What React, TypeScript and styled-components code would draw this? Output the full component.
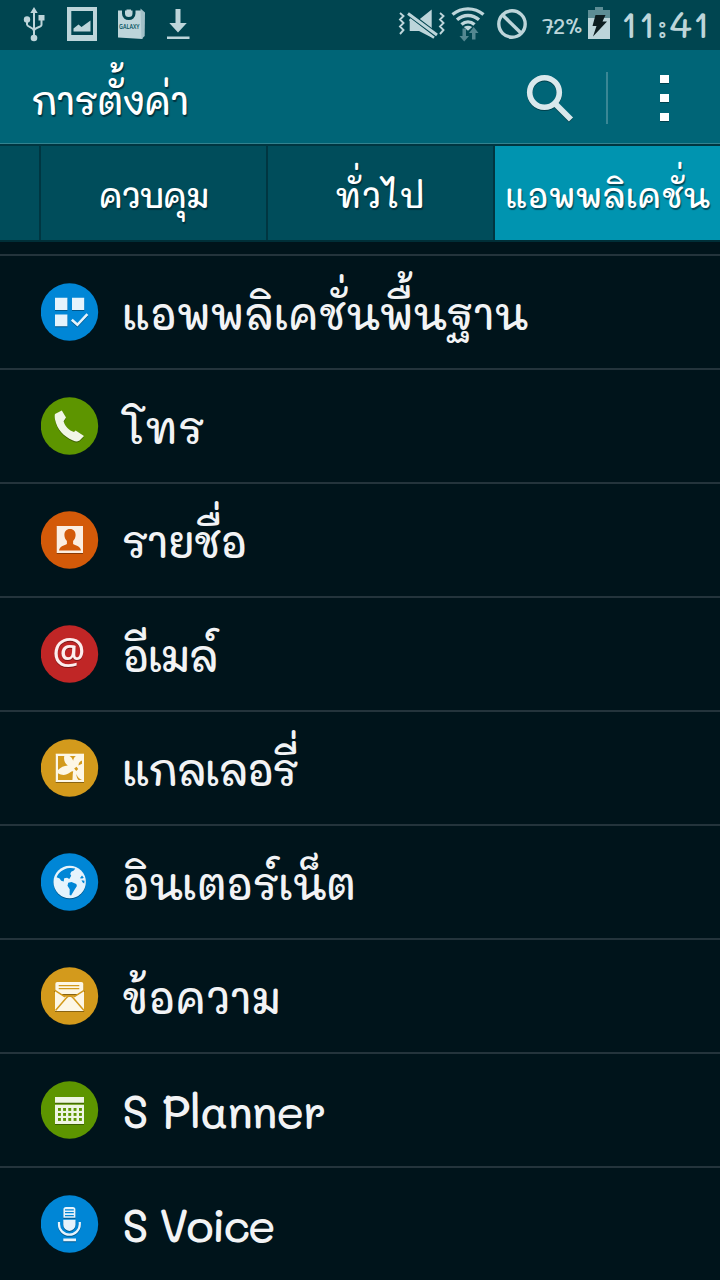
import React from 'react';
import styled, { createGlobalStyle } from 'styled-components';

const GlobalStyle = createGlobalStyle`
  * { box-sizing: border-box; }
  body {
    margin: 0;
    background: #00141b;
    color: #f2f3f5;
    font-family: Mali, Itim, "Noto Sans", sans-serif;
    font-weight: 500;
  }
`;

const Screen = styled.div`
  width: 720px;
  height: 1280px;
  overflow: hidden;
  display: flex;
  flex-direction: column;
  background: #00141b;
`;

const StatusBar = styled.header`
  height: 50px;
  flex: none;
  display: flex;
  justify-content: space-between;
  padding: 0 11px 0 22px;
  background: #004550;
  color: #bdd5da;
`;

const StatusGroup = styled.div<{ $gap?: number; $left?: number }>`
  display: flex;
  align-items: center;
  gap: ${p => p.$gap ?? 0}px;
  margin-left: ${p => p.$left ?? 0}px;
  svg { display: block; flex: none; }
`;

const StatusText = styled.span<{ $size: number; $width: number; $track?: number; $left: number; $line?: number }>`
  width: ${p => p.$width}px;
  margin-left: ${p => p.$left}px;
  font-size: ${p => p.$size}px;
  letter-spacing: ${p => p.$track ?? 0}px;
  line-height: ${p => p.$line ?? 50}px;
  height: 50px;
  white-space: nowrap;
`;

const ActionBar = styled.div`
  height: 94px;
  flex: none;
  display: flex;
  align-items: center;
  padding-left: 31px;
  background: #006577;
  border-bottom: 1px solid #338390;
`;

const Title = styled.h1`
  flex: 1;
  height: 93px;
  margin: 0;
  font-size: 38px;
  font-weight: 500;
  line-height: 101px;
  letter-spacing: -1.3px;
  color: #fff;
  white-space: nowrap;
  text-shadow: 1px 2px 1px rgba(0, 30, 40, 0.7);
`;

const ActionButton = styled.button<{ $width: number }>`
  width: ${p => p.$width}px;
  height: 93px;
  padding: 0;
  border: 0;
  background: none;
  svg { display: block; }
`;

const ActionDivider = styled.span`
  width: 2px;
  height: 52px;
  margin-top: 2px;
  background: #3a8795;
`;

const Tabs = styled.nav`
  height: 98px;
  flex: none;
  display: grid;
  grid-template-columns: 41px 227px 227px 225px;
  border-top: 2px solid #003641;
  border-bottom: 2px solid #002f38;
`;

const Tab = styled.div<{ $active?: boolean; $track?: number }>`
  height: 94px;
  text-align: center;
  background: ${p => (p.$active ? '#0094b0' : '#004d5b')};
  border-right: ${p => (p.$active ? '0' : '2px')} solid #003641;
  color: #fff;
  font-size: 34px;
  letter-spacing: ${p => p.$track ?? 0}px;
  line-height: 98px;
  white-space: nowrap;
  text-shadow: 1px 2px 1px rgba(0, 30, 40, 0.6);
`;

const List = styled.ul`
  flex: 1;
  min-height: 0;
  margin: 0;
  padding: 12px 0 0;
  list-style: none;
`;

const Row = styled.li`
  height: 114px;
  display: flex;
  align-items: center;
  gap: 23px;
  padding: 0 0 0 41px;
  border-top: 2px solid #24343c;
`;

const RowIcon = styled.svg`
  width: 58px;
  height: 58px;
  flex: none;
  display: block;
`;

const Label = styled.span<{ $size: number; $track: number }>`
  height: 112px;
  font-size: ${p => p.$size}px;
  letter-spacing: ${p => p.$track}px;
  line-height: 114px;
  white-space: nowrap;
`;

const Glyph = styled.g`
  filter: drop-shadow(0.7px 1px 0.5px rgba(0, 0, 0, 0.35));
`;

const icons: Record<string, (c: string) => React.ReactNode> = {
  apps: () => (
    <g fill="#e5f3fc">
      <path d="M14 14.8h12.4v12.2H14zM31 14.8h12.2v12.2H31zM14 31.6h12.4v11.6H14z" />
      <path d="M30.8 36.8l5.6 5 10-10.6" fill="none" stroke="#e5f3fc" strokeWidth="2.6" />
    </g>
  ),
  phone: () => (
    <path
      fill="#f1f6e6"
      d="M20.8 13.6L25 20.6 22.6 24.2C24 29.5 28 33.3 33 35L34.6 33.4 43 39 38.6 43.6C37 44.8 34.5 44.6 31.5 43.2 23 39.5 16 32.5 14 22.5 13.6 20 13.6 18.4 14 17Z"
    />
  ),
  contacts: c => (
    <>
      <path fill="#fbeee2" d="M15.7 15H42v27H15.7z" />
      <path
        fill={c}
        d="M29 18c3.600 0 5.600 2.500 5.600 6 0 2.500-1.100 4.500-2.500 6v3c2 1.600 7.300 1.700 7.900 6.500H18c.6-4.800 5.900-4.900 7.900-6.500v-3c-1.400-1.500-2.500-3.500-2.500-6 0-3.500 2-6 5.600-6z"
      />
    </>
  ),
  email: () => (
    <text x="27.800" y="38.700" textAnchor="middle" fill="#fdeeee" fontFamily='"Open Sans", sans-serif' fontSize="36.500" fontWeight="600">
      @
    </text>
  ),
  gallery: c => (
    <>
      <path fill="#fdf7e6" d="M14.700 14.700H43V43H14.700z" />
      <g fill={c}>
        <path d="M17 17h6.300c-.8 3.600.2 7 3.500 9.500-4 .3-7 1.800-9.800 4.500z" />
        <path d="M28.500 17h6.500c-1.700 1-2.600 2.600-2.800 4.800-.9-2.300-2-3.900-3.700-4.800z" />
        <path d="M17 34.300c4 2.400 8 2.200 12-.8 1.100-.9 2.200-1.300 3.200-1.200-.8 3.600-.3 6.200-.8 8.700H17z" />
        <path d="M41 21.500v3.200l-3.600 1.700c.2-2.500 1.500-4 3.600-4.900z" />
        <path d="M35.500 35c1 3.200 2.700 5 5.500 6h-3.500c-1.500-1.600-2.200-3.600-2-6z" />
        <path d="M33.200 29.500l2.300-1.700 1.700 2.200-1.900 1.900z" />
      </g>
    </>
  ),
  globe: c => (
    <>
      <circle cx="28.700" cy="29" r="16.200" fill="#e6f3fc" />
      <g fill={c}>
        <path d="M15.600 24.300C17.600 19.300 22.500 15.600 28.500 15c2-.2 4 .1 5.800.6l-1.500 1.800-2.600 1.300-1 2.200 1 1.900-1.900 3.300-2.200-1.400-2.900.6-.5 3.300-2.500-.8-1.600-2.400z" />
        <path d="M27.200 29.800l3.300-.9 4.800 2 .6 2.200-2.700 4.200-3.100 5.200-1.500-.6.100-5.700-2.200-3.500z" />
        <path d="M41 22.500l1.800 2.300-1.600.8-2.300-.4zM40.500 27.200l3 .5-.3 2.800-1.700-1.200z" />
      </g>
    </>
  ),
  messages: c => (
    <>
      <rect x="14.300" y="15" width="28" height="12" rx="2" fill="#fdf7e6" />
      <path d="M17.700 18.600h20.600M17.700 21.600h20.600" stroke={c} strokeWidth="1.200" />
      <path fill="#fdf7e6" d="M14 24l10 5.700h9L43 24v20H14z" />
      <path
        d="M13.500 23.200L24 29.800M43.500 23.200L33 29.800M14.500 43.500L25 31.200c2.300-3 5.200-3 7.500 0L43 43.500"
        fill="none"
        stroke={c}
        strokeWidth="1.500"
      />
    </>
  ),
  planner: c => (
    <>
      <path fill="#eef5e2" d="M14 16h29v5.700H14zM14 23.700h29V43H14z" />
      {[27, 32, 37].map(y => [17, 22.1, 27.3, 32.6, 38].map(x => <rect key={`${x}-${y}`} x={x} y={y} width="2.900" height="2.900" fill={c} />))}
    </>
  ),
  voice: c => (
    <>
      <path fill="#e6f3fc" d="M25 12h6.800a2.600 2.600 0 0 1 2.600 2.600v8.200h-12v-8.200A2.600 2.600 0 0 1 25 12z" />
      <path d="M24 14.800h8.800M24 17.600h8.800M24 20.600h8.800" stroke={c} strokeWidth="1.200" />
      <path fill="#e6f3fc" d="M22.300 24.700h12.200v5.100a6.100 6.100 0 0 1-12.200 0zM22.300 43.600H35v2.600H22.300z" />
      <path d="M18 27v2.300a10.400 10.400 0 0 0 20.800 0V27" fill="none" stroke="#e6f3fc" strokeWidth="2.200" />
    </>
  ),
};

const rows = [
  { icon: 'apps', color: '#0086d6', text: 'แอพพลิเคชั่นพื้นฐาน', size: 43, track: -0.8 },
  { icon: 'phone', color: '#5d9500', text: 'โทร', size: 43, track: 0.6 },
  { icon: 'contacts', color: '#d35a09', text: 'รายชื่อ', size: 43, track: -1.4 },
  { icon: 'email', color: '#c02626', text: 'อีเมล์', size: 43, track: -2.2 },
  { icon: 'gallery', color: '#d39a1c', text: 'แกลเลอรี่', size: 43, track: -2.2 },
  { icon: 'globe', color: '#0086d6', text: 'อินเตอร์เน็ต', size: 43, track: -1.1 },
  { icon: 'messages', color: '#d39a1c', text: 'ข้อความ', size: 43, track: -0.3 },
  { icon: 'planner', color: '#5d9500', text: 'S Planner', size: 46, track: -1.3 },
  { icon: 'voice', color: '#0086d6', text: 'S Voice', size: 46, track: -2.6 },
];

const UsbIcon = () => (
  <svg width="24" height="50" viewBox="22 0 24 50" fill="#bdd5da">
    <path d="M34 7l3.700 6h-7.400zM38.500 15h6v5.500h-6z" />
    <circle cx="27" cy="19.500" r="3.200" />
    <circle cx="34" cy="38" r="3.300" />
    <path d="M34 12v25M27 20v4.500c0 2.500 7 3 7 6.500M41.500 19v6c0 2.500-7.500 2-7.500 6" fill="none" stroke="#bdd5da" strokeWidth="2" />
  </svg>
);

const PictureIcon = () => (
  <svg width="30" height="50" viewBox="67 0 30 50" fill="#bdd5da">
    <path fillRule="evenodd" d="M67 7h30v34H67zM71.300 11v24h21.700V11z" />
    <path d="M73.500 31.500v-3l5-4 3 2.500 9-6.500v11z" />
  </svg>
);

const BagIcon = () => (
  <svg width="28" height="50" viewBox="117 0 28 50">
    <path fill="#bdd5da" d="M117 10.500h24l.500 28.500-24.500-1.500z" />
    <path fill="#a3c1c8" d="M139.500 8.500l4.500 4-.3 23.500-3.200 3z" />
    <path d="M122.500 9v4.500c0 6.700 10.500 6.700 10.500 0V9" fill="none" stroke="#004550" strokeWidth="3" />
    <path d="M125.500 12.500V9.500h4.500v3c0 2.500-4.500 2.500-4.500 0z" fill="#bdd5da" />
    <text x="118" y="29" fontSize="7" fontFamily='"Open Sans", sans-serif' fontWeight="600" fill="#00505c" textLength="20.500" lengthAdjust="spacingAndGlyphs">
      GALAXY
    </text>
  </svg>
);

const DownloadIcon = () => (
  <svg width="24" height="50" viewBox="167 0 24 50" fill="#bdd5da">
    <path d="M175.500 9h5v14h6.300l-8.800 9.500-8.700-9.500h6.200zM167 36.500h22.500V39H167z" />
  </svg>
);

const MuteIcon = () => (
  <svg width="48" height="50" viewBox="398 0 48 50">
    <path d="M400 13l3.500 3-3.500 3.500 3.500 3.500-3.500 3.500 3.500 3.500-3.500 4M440 13l3.500 3-3.500 3.500 3.500 3.500-3.500 3.500 3.500 3.500-3.500 4" fill="none" stroke="#bdd5da" strokeWidth="1.900" />
    <path fill="#bdd5da" d="M409.700 19.500h9.500l12.500-10V37.500L419 31h-9.300z" />
    <path d="M406 12L437 35.500" stroke="#004550" strokeWidth="5.500" />
    <path d="M408 13.500L437 35" stroke="#bdd5da" strokeWidth="3" />
    <path d="M409.700 19.300L434 37.800" stroke="#bdd5da" strokeWidth="2.500" />
  </svg>
);

const WifiIcon = () => (
  <svg width="34" height="50" viewBox="451 0 34 50">
    <path d="M452.500 14.500c9-7.500 22-7.500 31 0M457 19.800c6.500-5.800 15.500-5.800 22 0M461.500 24.600c4-3.600 9-3.600 13 0" fill="none" stroke="#bdd5da" strokeWidth="3.400" />
    <path d="M463.800 27c2.700-1.600 5.700-1.600 8.400 0l-4.200 3.800z" fill="#bdd5da" />
    <path d="M462.500 28.500h3.500V36h3l-4.800 5.500-4.700-5.500h3zM472 39.500V33h-3l4.700-6 4.800 6h-3v6.500z" fill="#548791" />
  </svg>
);

const BlockIcon = () => (
  <svg width="30" height="50" viewBox="497 0 30 50">
    <path d="M502 14.500l20 19.500" stroke="#bdd5da" strokeWidth="3.500" />
    <circle cx="512" cy="24" r="13.200" fill="none" stroke="#bdd5da" strokeWidth="3.400" />
  </svg>
);

const BatteryIcon = () => (
  <svg width="22" height="50" viewBox="588 0 22 50">
    <path fill="#5d8d95" d="M595 7h8v3h7v9h-22v-9h7z" />
    <path fill="#bdd5da" d="M588 18h22v21h-22z" />
    <path fill="#0d1d20" d="M595.500 15h10l-3 6.500h4.500L593 36.500l3.500-10.500h-4z" />
  </svg>
);

const SearchIcon = () => (
  <svg width="80" height="93" viewBox="510 50 80 93">
    <Glyph fill="none" stroke="#d9e8ec">
      <circle cx="544.500" cy="92.500" r="14.800" strokeWidth="5.600" />
      <path d="M555 103.500L571 119.500" strokeWidth="5.800" />
    </Glyph>
  </svg>
);

const MoreIcon = () => (
  <svg width="112" height="93" viewBox="608 50 112 93">
    <Glyph fill="#fff">
      <path d="M660 75h9v8h-9zM660 94h9v8h-9zM660 113h9v8h-9z" />
    </Glyph>
  </svg>
);

export default function App() {
  return (
    <Screen>
      <GlobalStyle />
      <StatusBar>
        <StatusGroup $gap={21}>
          <UsbIcon />
          <PictureIcon />
          <BagIcon />
          <DownloadIcon />
        </StatusGroup>
        <StatusGroup>
          <StatusGroup $gap={5}>
            <MuteIcon />
            <WifiIcon />
          </StatusGroup>
          <StatusGroup $left={12}>
            <BlockIcon />
          </StatusGroup>
          <StatusText $size={22} $width={43} $left={15} $track={-1.2} $line={52}>72%</StatusText>
          <StatusGroup $left={3}>
            <BatteryIcon />
          </StatusGroup>
          <StatusText $size={37} $width={88} $left={11} $track={1.3} $line={46}>11:41</StatusText>
        </StatusGroup>
      </StatusBar>
      <ActionBar>
        <Title>การตั้งค่า</Title>
        <ActionButton $width={96} aria-label="ค้นหา"><SearchIcon /></ActionButton>
        <ActionDivider />
        <ActionButton $width={112} aria-label="เมนู"><MoreIcon /></ActionButton>
      </ActionBar>
      <Tabs>
        <Tab />
        <Tab $track={-1.6}>ควบคุม</Tab>
        <Tab $track={1.2}>ทั่วไป</Tab>
        <Tab $active $track={-0.5}>แอพพลิเคชั่น</Tab>
      </Tabs>
      <List>
        {rows.map(r => (
          <Row key={r.icon}>
            <RowIcon viewBox="0 0 58 58">
              <circle cx="28.500" cy="29" r="28.700" fill={r.color} />
              <Glyph>{icons[r.icon](r.color)}</Glyph>
            </RowIcon>
            <Label $size={r.size} $track={r.track}>{r.text}</Label>
          </Row>
        ))}
      </List>
    </Screen>
  );
}
